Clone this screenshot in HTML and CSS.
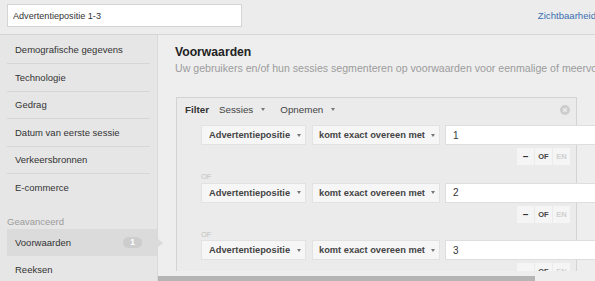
FILE: index.html
```html
<!DOCTYPE html>
<html lang="nl">
  <head>
    <meta charset="UTF-8" />
    <title>Segment bewerken</title>
    <link rel="stylesheet" href="styles.css">
  </head>
  <body>
    <div class="topbar">
      <input class="segment-name" value="Advertentiepositie 1-3" />
      <a class="visibility-link" href="#">Zichtbaarheid</a>
    </div>

    <div class="main">
      <div class="sidebar">
        <ul class="nav-list">
          <li class="nav-item">Demografische gegevens</li>
          <li class="nav-item">Technologie</li>
          <li class="nav-item">Gedrag</li>
          <li class="nav-item">Datum van eerste sessie</li>
          <li class="nav-item">Verkeersbronnen</li>
          <li class="nav-item last">E-commerce</li>
        </ul>
        <div class="nav-label">Geavanceerd</div>
        <ul class="nav-list advanced">
          <li class="nav-item active">Voorwaarden <span class="badge">1</span></li>
          <li class="nav-item last">Reeksen</li>
        </ul>
      </div>

      <div class="content">
        <div class="content-scroll">
          <h2 class="section-title">Voorwaarden</h2>
          <p class="section-desc">Uw gebruikers en/of hun sessies segmenteren op voorwaarden voor eenmalige of meervoudige sessies.</p>

          <div class="filter-box">
            <div class="filter-header">
              <span class="filter-title">Filter</span>
              <span class="dropdown">Sessies <i class="caret"></i></span>
              <span class="dropdown">Opnemen <i class="caret"></i></span>
              <span class="close-btn">
                <svg width="10" height="10" viewBox="0 0 10 10">
                  <circle cx="5" cy="5" r="5" fill="#cdcdcd" />
                  <path d="M3.2 3.2l3.6 3.6M6.8 3.2l-3.6 3.6" stroke="#ececec" stroke-width="1.3" />
                </svg>
              </span>
            </div>

            <div class="conditions">
              <div class="condition">
                <div class="condition-row">
                  <div class="select dim-select">Advertentiepositie <i class="caret"></i></div>
                  <div class="select op-select">komt exact overeen met <i class="caret"></i></div>
                  <input class="value-input" value="1" />
                </div>
                <div class="logic-btns">
                  <span class="logic-btn minus">&ndash;</span>
                  <span class="logic-btn on">OF</span>
                  <span class="logic-btn off">EN</span>
                </div>
              </div>
              <div class="or-label">OF</div>
              <div class="condition">
                <div class="condition-row">
                  <div class="select dim-select">Advertentiepositie <i class="caret"></i></div>
                  <div class="select op-select">komt exact overeen met <i class="caret"></i></div>
                  <input class="value-input" value="2" />
                </div>
                <div class="logic-btns">
                  <span class="logic-btn minus">&ndash;</span>
                  <span class="logic-btn on">OF</span>
                  <span class="logic-btn off">EN</span>
                </div>
              </div>
              <div class="or-label">OF</div>
              <div class="condition">
                <div class="condition-row">
                  <div class="select dim-select">Advertentiepositie <i class="caret"></i></div>
                  <div class="select op-select">komt exact overeen met <i class="caret"></i></div>
                  <input class="value-input" value="3" />
                </div>
                <div class="logic-btns">
                  <span class="logic-btn minus">&ndash;</span>
                  <span class="logic-btn on">OF</span>
                  <span class="logic-btn off">EN</span>
                </div>
              </div>
            </div>
          </div>
        </div>
        <div class="hscroll">
          <div class="hscroll-thumb"></div>
        </div>
      </div>
    </div>
  </body>
</html>
```

FILE: styles.css
```css
/* Reset */
* {
  margin: 0;
  padding: 0;
  box-sizing: border-box;
}

body {
  font-family: "Liberation Sans", Arial, sans-serif;
  font-size: 9.5px;
  color: #333;
  background: #eeeeee;
  width: 595px;
  height: 281px;
  overflow: hidden;
}

ul {
  list-style: none;
}

/* Top bar */
.topbar {
  display: flex;
  align-items: center;
  justify-content: space-between;
  height: 35px;
  padding: 4px 7px 7px 7px;
  background: #ececec;
  border-bottom: 1px solid #d6d6d6;
  overflow: hidden;
}

.segment-name {
  width: 235px;
  height: 23px;
  padding: 0 5px;
  border: 1px solid #d4d4d4;
  background: #fff;
  font-family: inherit;
  font-size: 9.1px;
  color: #333;
}

.visibility-link {
  font-size: 9.6px;
  color: #3a6eb0;
  text-decoration: none;
  white-space: nowrap;
  margin-right: -8px;
}

/* Layout */
.main {
  display: flex;
  height: 246px;
}

.sidebar {
  width: 158px;
  flex-shrink: 0;
  background: #e6e6e6;
  border-right: 1px solid #d9d9d9;
  padding: 1.5px 0 0 7px;
}

.nav-list {
  margin-right: 7px;
}

.nav-item {
  position: relative;
  display: flex;
  align-items: center;
  justify-content: space-between;
  height: 27.5px;
  padding: 0 8px;
  border-bottom: 1px solid #d6d6d6;
  color: #333;
}

.nav-item.last {
  border-bottom: none;
  height: 26.5px;
}

.nav-label {
  margin-top: 14.5px;
  height: 14px;
  line-height: 14px;
  color: #9b9b9b;
}

.advanced .nav-item {
  height: 27px;
  border-bottom: none;
}

.nav-item.active {
  background: #dbdbdb;
  margin-right: -7px;
  padding-right: 15px;
}

.nav-item.active::after {
  content: "";
  position: absolute;
  right: -6px;
  top: 50%;
  margin-top: -5px;
  border-top: 5px solid transparent;
  border-bottom: 5px solid transparent;
  border-left: 6px solid #dbdbdb;
}

.badge {
  display: inline-block;
  width: 19px;
  height: 11px;
  line-height: 11px;
  border-radius: 6px;
  background: #cdcdcd;
  color: #fff;
  font-weight: bold;
  font-size: 8.5px;
  text-align: center;
}

/* Content */
.content {
  flex: 1;
  display: flex;
  flex-direction: column;
  min-width: 0;
}

.content-scroll {
  height: 236px;
  overflow: hidden;
  padding: 9px 0 0 17px;
}

.section-title {
  font-size: 12.2px;
  line-height: 16px;
  font-weight: bold;
  color: #222;
}

.section-desc {
  margin-top: 1px;
  line-height: 14px;
  font-size: 10.6px;
  color: #9c9c9c;
  white-space: nowrap;
}

.filter-box {
  margin: 22px 0 0 1px;
  width: 401px;
  background: #ebebeb;
  border: 1px solid #d3d3d3;
  border-bottom: none;
  height: 300px;
}

.filter-header {
  display: flex;
  align-items: center;
  height: 19px;
  padding: 4px 6px 0 8px;
  font-size: 9.8px;
  color: #444;
}

.filter-title {
  font-weight: bold;
  color: #333;
  margin-right: 10px;
}

.dropdown {
  display: flex;
  align-items: center;
  gap: 8px;
  margin-right: 15px;
}

.close-btn {
  margin-left: auto;
  display: flex;
}

.caret {
  display: inline-block;
  width: 0;
  height: 0;
  border-left: 2.5px solid transparent;
  border-right: 2.5px solid transparent;
  border-top: 3px solid #777;
}

.conditions {
  padding: 8px 6px 0 24px;
}

.condition-row {
  display: flex;
  gap: 6px;
  height: 20px;
}

.select {
  display: flex;
  align-items: center;
  justify-content: space-between;
  flex-shrink: 0;
  height: 20px;
  padding: 0 4px 0 7px;
  background: #f6f6f6;
  border: 1px solid #e2e2e2;
  font-size: 9.3px;
  font-weight: bold;
  color: #444;
  white-space: nowrap;
}

.dim-select {
  width: 105px;
}

.op-select {
  width: 128px;
  padding-left: 6px;
  margin-right: -1px;
}

.value-input {
  width: 200px;
  flex-shrink: 0;
  height: 20px;
  padding: 0 7px;
  border: 1px solid #dedede;
  background: #fff;
  font-family: inherit;
  font-size: 10px;
  color: #333;
}

.logic-btns {
  display: flex;
  justify-content: flex-end;
  gap: 1px;
  margin-top: 3px;
}

.logic-btn {
  width: 17px;
  height: 17px;
  line-height: 17px;
  text-align: center;
  background: #f5f5f5;
  font-size: 7.5px;
  font-weight: bold;
  color: #444;
}

.logic-btn.minus {
  font-size: 10px;
  color: #333;
}

.logic-btn.off {
  color: #cfcfcf;
}

.or-label {
  height: 17.5px;
  padding-top: 7px;
  line-height: 10px;
  font-size: 7.5px;
  color: #c2c2c2;
}

/* Horizontal scrollbar */
.hscroll {
  height: 10px;
  padding-top: 5px;
  background: #eeeeee;
}

.hscroll-thumb {
  width: 377px;
  height: 5px;
  background: #b5b5b5;
}
```
